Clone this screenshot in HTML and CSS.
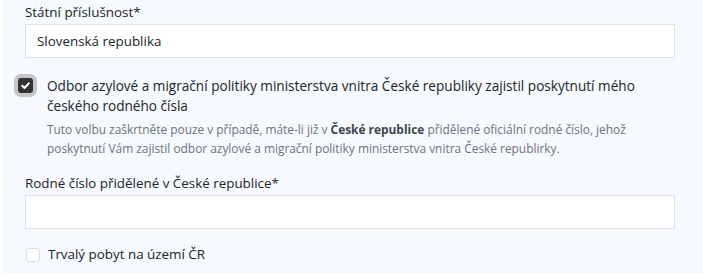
FILE: index.html
```html
<!DOCTYPE html>
<html lang="cs">
<head>
<meta charset="utf-8">
<title>Formulář</title>
<link rel="stylesheet" href="styles.css">
</head>
<body>
<div class="form">
  <div class="field">
    <label class="label">Státní příslušnost*</label>
    <div class="input">Slovenská republika</div>
  </div>

  <div class="check check--on">
    <span class="box box--on">
      <svg viewBox="0 0 15 15" width="15" height="15"><path d="M4.2 7.8 L6.5 10 L10.8 5.4" fill="none" stroke="#fff" stroke-width="2" stroke-linecap="round" stroke-linejoin="round"/></svg>
    </span>
    <div class="check-body">
      <div class="check-text check-text--main">Odbor azylové a migrační politiky ministerstva vnitra České republiky zajistil poskytnutí mého českého rodného čísla</div>
      <div class="hint">Tuto volbu zaškrtněte pouze v případě, máte-li již v <b>České republice</b> přidělené oficiální rodné číslo, jehož poskytnutí Vám zajistil odbor azylové a migrační politiky ministerstva vnitra České republirky.</div>
    </div>
  </div>

  <div class="field field--second">
    <label class="label">Rodné číslo přidělené v České republice*</label>
    <div class="input"></div>
  </div>

  <div class="check check--off">
    <span class="box box--off"></span>
    <div class="check-body">
      <div class="check-text">Trvalý pobyt na území ČR</div>
    </div>
  </div>
</div>
</body>
</html>
```

FILE: styles.css
```css
html, body {
  margin: 0;
  padding: 0;
  background: #f6f9fd;
}

body {
  font-family: "Open Sans", "Noto Sans", "Liberation Sans", sans-serif;
  color: #212529;
  font-size: 13.4px;
}

.form {
  border-left: 3px solid #ffffff;
  min-height: 273px;
  box-sizing: border-box;
  padding: 2px 28px 0 22px;
}

.label {
  display: block;
  font-size: 13.4px;
  line-height: 21px;
  color: #212529;
}

.input {
  margin-top: 1px;
  height: 34px;
  box-sizing: border-box;
  background: #fff;
  border: 1px solid #dfe3e8;
  padding: 0 11px;
  font-size: 13.4px;
  line-height: 32px;
  color: #212529;
}

.field--second {
  margin-top: 15px;
}

.check {
  display: flex;
  align-items: flex-start;
}

.check--on {
  margin-top: 18px;
}

.check--off {
  margin-top: 15px;
}

.box {
  flex: none;
  box-sizing: border-box;
  display: block;
}

.box--on {
  width: 15px;
  height: 15px;
  margin: 2px 14px 0 -7px;
  background: #343434;
  border-radius: 3px;
  box-shadow: 0 0 0 4px #c4c6c9;
}

.box--on svg {
  display: block;
}

.box--off {
  width: 14px;
  height: 14px;
  margin: 4px 8px 0 1px;
  background: #fff;
  border: 1px solid #dcdfe4;
  border-radius: 3px;
}

.check-text {
  font-size: 13.4px;
  line-height: 20px;
  color: #212529;
}

.check-text--main {
  font-size: 13.6px;
}

.hint {
  margin-top: 4px;
  font-size: 11.9px;
  line-height: 19px;
  color: #6c757d;
}

.hint b {
  font-weight: 700;
  color: #3f464d;
}
```
